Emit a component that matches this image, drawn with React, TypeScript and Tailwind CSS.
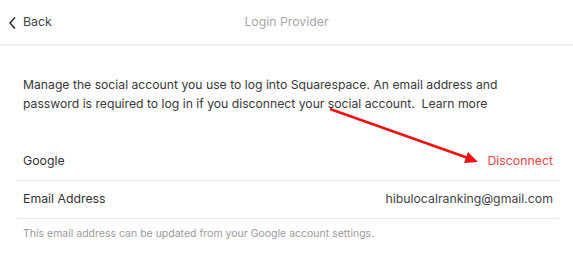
import React from 'react';

const App: React.FC = () => {
  return (
    <div className="relative w-[573px] h-[259px] bg-white overflow-hidden" style={{ fontFamily: 'Inter, "Liberation Sans", sans-serif' }}>
      <header className="h-[46px] border-b-2 border-[#efefef] flex items-center relative">
        <div className="flex items-center pl-[8px] pt-[1px] text-[12.3px] text-[#444]">
          <svg width="10" height="14" viewBox="0 0 10 14" className="mr-[5px]">
            <path d="M7 1.5 L2 7 L7 12.5" fill="none" stroke="#333" strokeWidth="1.6" />
          </svg>
          <span>Back</span>
        </div>
        <div className="absolute left-0 right-0 text-center text-[12.3px] text-[#a8a8a8] pt-[1px]">Login Provider</div>
      </header>

      <div className="pl-[17px] pr-[14px]">
        <p className="px-[6px] pt-[29px] text-[12.2px] leading-[19px] text-[#383838]">
          Manage the social account you use to log into Squarespace. An email address and password is required to log in if you disconnect your social account.&nbsp; Learn more
        </p>

        <div className="mt-[29px] h-[39px] flex items-center justify-between px-[6px] border-b border-[#ebebeb] text-[12.3px]">
          <span className="text-[#333]">Google</span>
          <span className="text-[#f04545]">Disconnect</span>
        </div>
        <div className="h-[38px] flex items-center justify-between px-[6px] border-b border-[#ebebeb] text-[12.3px]">
          <span className="text-[#333]">Email Address</span>
          <span className="text-[#444]">hibulocalranking@gmail.com</span>
        </div>
        <p className="px-[6px] pt-[7px] text-[10.5px] text-[#9a9a9a]">
          This email address can be updated from your Google account settings.
        </p>
      </div>

      <svg className="absolute left-0 top-0 pointer-events-none" width="573" height="259">
        <line x1="330" y1="109" x2="468" y2="158" stroke="#ee1111" strokeWidth="2.5" />
        <polygon points="478,162 464,163 468,152" fill="#ee1111" />
      </svg>
    </div>
  );
};

export default App;
